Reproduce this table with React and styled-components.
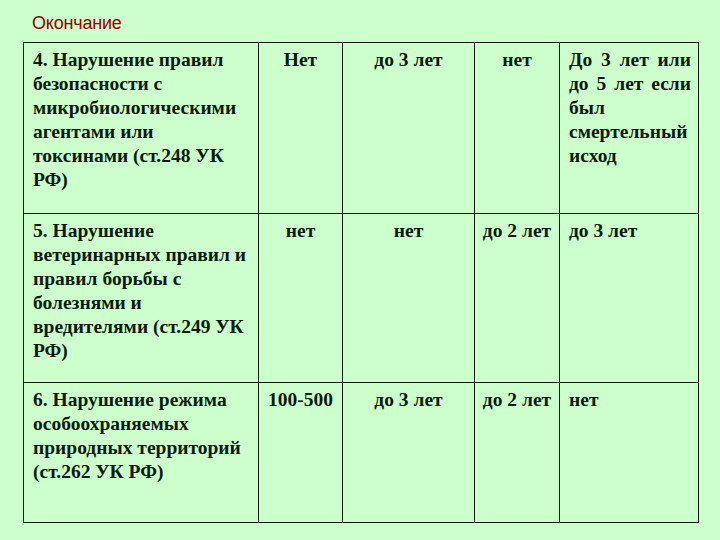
import React from 'react';
import styled, { createGlobalStyle } from 'styled-components';

const GlobalStyle = createGlobalStyle`
    html, body {
        margin: 0;
        padding: 0;
        background: #ccffcc;
    }
`;

const rows = [
    {
        name: '4. Нарушение правил безопасности с микробиологическими агентами или токсинами (ст.248 УК РФ)',
        cells: ['Нет', 'до 3 лет', 'нет', 'До 3 лет или до 5 лет если был смертельный исход'],
        height: 171,
    },
    {
        name: '5. Нарушение ветеринарных правил и правил борьбы с болезнями и вредителями (ст.249 УК РФ)',
        cells: ['нет', 'нет', 'до 2 лет', 'до 3 лет'],
        height: 169,
    },
    {
        name: '6. Нарушение режима особоохраняемых природных территорий (ст.262 УК РФ)',
        cells: ['100-500', 'до 3 лет', 'до 2 лет', 'нет'],
        height: 140,
    },
];

const Page = styled.div`
    width: 720px;
    height: 540px;
    padding: 13px 0 0 23px;
    box-sizing: border-box;
`;

const Title = styled.div`
    font-family: 'Liberation Sans', Arial, sans-serif;
    font-size: 18px;
    line-height: 21px;
    color: #990000;
    padding-left: 9px;
    height: 29px;
    letter-spacing: -0.2px;
`;

const Table = styled.table`
    border-collapse: collapse;
    table-layout: fixed;
    width: 675px;
    font-family: 'Liberation Serif', 'Times New Roman', serif;
    font-weight: bold;
    font-size: 19.5px;
    line-height: 24px;
    color: #0a1a0a;
`;

const Cell = styled.td`
    border: 1.5px solid #0a1a0a;
    vertical-align: top;
    padding: 5px ${(p) => (p.$left ? '7px' : '3px')} 0 ${(p) => (p.$left ? '9px' : '3px')};
    text-align: ${(p) => p.$align || 'center'};
    height: ${(p) => p.$h}px;
    box-sizing: border-box;
`;

const widths = [235, 84, 132, 85, 139];

export default function App() {
    return (
        <Page>
            <GlobalStyle />
            <Title>Окончание</Title>
            <Table>
                <colgroup>
                    {widths.map((w, i) => (
                        <col key={i} style={{ width: w }} />
                    ))}
                </colgroup>
                <tbody>
                    {rows.map((row, r) => (
                        <tr key={r}>
                            <Cell $left $align="left" $h={row.height}>
                                {row.name}
                            </Cell>
                            {row.cells.map((c, i) => (
                                <Cell key={i} $h={row.height} $align={i === 3 ? 'justify' : 'center'} $left={i === 3}>
                                    {c}
                                </Cell>
                            ))}
                        </tr>
                    ))}
                </tbody>
            </Table>
        </Page>
    );
}
